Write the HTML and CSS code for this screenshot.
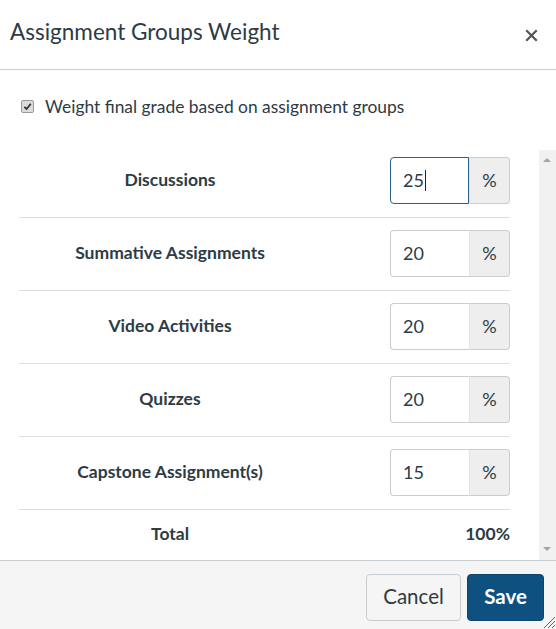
FILE: index.html
```html
<!DOCTYPE html>
<html lang="en">
<head>
    <meta charset="UTF-8">
    <meta name="viewport" content="width=device-width, initial-scale=1.0">
    <title>Assignment Groups Weight</title>
    <link rel="stylesheet" href="styles.css">
</head>
<body>
    <div class="modal">
        <!-- Kop van het venster -->
        <div class="modal-header">
            <h1 class="modal-title">Assignment Groups Weight</h1>
            <button class="close-btn" aria-label="Close">
                <svg width="13" height="13" viewBox="0 0 13 13">
                    <path d="M2 2 L11 11 M11 2 L2 11" stroke="#555" stroke-width="2.2" stroke-linecap="square" />
                </svg>
            </button>
        </div>

        <!-- Inhoud -->
        <div class="modal-body">
            <label class="weight-toggle">
                <span class="fake-check">
                    <svg width="9" height="9" viewBox="0 0 9 9">
                        <path d="M1.3 4.8 L3.6 7 L7.8 1.8" fill="none" stroke="#333" stroke-width="1.8" />
                    </svg>
                </span>
                Weight final grade based on assignment groups
            </label>

            <div class="scroll-area">
                <div class="scroll-content">
                    <div class="group-row">
                        <div class="group-name">Discussions</div>
                        <div class="group-weight">
                            <div class="input-group focused">
                                <div class="weight-input">25<span class="caret"></span></div>
                                <div class="addon">%</div>
                            </div>
                        </div>
                    </div>
                    <div class="group-row">
                        <div class="group-name">Summative Assignments</div>
                        <div class="group-weight">
                            <div class="input-group">
                                <div class="weight-input">20</div>
                                <div class="addon">%</div>
                            </div>
                        </div>
                    </div>
                    <div class="group-row">
                        <div class="group-name">Video Activities</div>
                        <div class="group-weight">
                            <div class="input-group">
                                <div class="weight-input">20</div>
                                <div class="addon">%</div>
                            </div>
                        </div>
                    </div>
                    <div class="group-row">
                        <div class="group-name">Quizzes</div>
                        <div class="group-weight">
                            <div class="input-group">
                                <div class="weight-input">20</div>
                                <div class="addon">%</div>
                            </div>
                        </div>
                    </div>
                    <div class="group-row">
                        <div class="group-name">Capstone Assignment(s)</div>
                        <div class="group-weight">
                            <div class="input-group">
                                <div class="weight-input">15</div>
                                <div class="addon">%</div>
                            </div>
                        </div>
                    </div>
                    <div class="group-row total-row">
                        <div class="group-name">Total</div>
                        <div class="group-weight">100%</div>
                    </div>
                </div>

                <!-- Schuifbalk -->
                <div class="scrollbar">
                    <span class="arrow up"></span>
                    <span class="arrow down"></span>
                </div>
            </div>
        </div>

        <!-- Voettekst met knoppen -->
        <div class="modal-footer">
            <button class="btn btn-cancel">Cancel</button>
            <button class="btn btn-primary">Save</button>
            <svg class="resize-grip" width="16" height="16" viewBox="0 0 16 16">
                <path d="M15 4 L4 15 M15 8 L8 15 M15 12 L12 15" stroke="#666" stroke-width="1" />
            </svg>
        </div>
    </div>
</body>
</html>
```

FILE: styles.css
```css
/* Algemeen */
* {
    box-sizing: border-box;
}

body {
    margin: 0;
    font-family: Lato, "Open Sans", sans-serif;
    color: #2d3b45;
    background-color: #fff;
}

.modal {
    width: 556px;
    height: 629px;
    display: flex;
    flex-direction: column;
    overflow: hidden;
}

/* Kop */
.modal-header {
    height: 70px;
    flex-shrink: 0;
    display: flex;
    align-items: center;
    justify-content: space-between;
    padding: 0 18px 6px 10px;
    border-bottom: 1px solid #c7cdd1;
}

.modal-title {
    margin: 0;
    font-size: 22.5px;
    font-weight: 400;
    color: #2d3b45;
}

.close-btn {
    border: none;
    background: none;
    padding: 0;
    width: 13px;
    height: 13px;
    margin-top: 7px;
    cursor: pointer;
}

.close-btn svg {
    display: block;
}

/* Inhoud */
.modal-body {
    flex: 1;
    display: flex;
    flex-direction: column;
    min-height: 0;
}

.weight-toggle {
    display: flex;
    align-items: center;
    gap: 11px;
    height: 75px;
    padding-left: 21px;
    padding-bottom: 3px;
    font-size: 17.4px;
}

.fake-check {
    width: 13px;
    height: 13px;
    border: 1px solid #9a9a9a;
    border-radius: 2px;
    background-color: #dcdcdc;
    display: flex;
    align-items: center;
    justify-content: center;
}

.fake-check svg {
    display: block;
}

.scroll-area {
    flex: 1;
    display: flex;
    min-height: 0;
    overflow: hidden;
}

.scroll-content {
    flex: 1;
    padding: 0 29px 0 19px;
}

.group-row {
    display: flex;
    align-items: center;
    height: 73px;
    padding-bottom: 2px;
    border-bottom: 1px solid #dcdfe2;
}

.group-name {
    width: 302px;
    text-align: center;
    font-size: 17.5px;
    font-weight: 700;
    margin-bottom: 2px;
}

.group-weight {
    flex: 1;
    display: flex;
    justify-content: flex-end;
}

.input-group {
    display: flex;
    height: 47px;
}

.weight-input {
    width: 79px;
    border: 1px solid #c7cdd1;
    border-right: none;
    border-radius: 4px 0 0 4px;
    padding-left: 12px;
    display: flex;
    align-items: center;
    font-size: 18px;
    background-color: #fff;
}

.focused .weight-input {
    border: 1px solid #26628a;
}

.caret {
    display: inline-block;
    width: 1px;
    height: 21px;
    background-color: #222;
    margin-left: 1px;
}

.addon {
    width: 41px;
    border: 1px solid #c7cdd1;
    border-left: 1px solid #e3e3e3;
    border-radius: 0 4px 4px 0;
    background-color: #eeeeee;
    display: flex;
    align-items: center;
    justify-content: center;
    font-size: 18px;
}

.total-row {
    border-bottom: none;
    align-items: flex-start;
    padding-top: 13px;
}

.total-row .group-weight {
    font-size: 17.5px;
    font-weight: 700;
}

/* Nagemaakte schuifbalk */
.scrollbar {
    width: 17px;
    margin-top: 5px;
    background-color: #f1f1f1;
    position: relative;
}

.arrow {
    position: absolute;
    left: 4px;
    width: 0;
    height: 0;
    border-left: 4px solid transparent;
    border-right: 4px solid transparent;
}

.arrow.up {
    top: 8px;
    border-bottom: 4px solid #a3a3a3;
}

.arrow.down {
    bottom: 9px;
    border-top: 4px solid #a3a3a3;
}

/* Voettekst */
.modal-footer {
    height: 69px;
    flex-shrink: 0;
    display: flex;
    justify-content: flex-end;
    align-items: flex-start;
    gap: 6px;
    padding: 13px 12px 0 0;
    border-top: 1px solid #c7cdd1;
    background-color: #f5f5f5;
    position: relative;
}

.btn {
    height: 47px;
    padding: 0 0 3px;
    font-family: Lato, "Open Sans", sans-serif;
    font-size: 20.5px;
    border: 1px solid #c7cdd1;
    border-radius: 4px;
    background-color: #f5f5f5;
    color: #2d3b45;
    cursor: pointer;
}

.btn-cancel {
    width: 95px;
}

.btn-primary {
    width: 77px;
    background-color: #0e5181;
    border-color: #0b4570;
    color: #fff;
    font-weight: 700;
}

.resize-grip {
    position: absolute;
    right: 0;
    bottom: 0;
}
```
